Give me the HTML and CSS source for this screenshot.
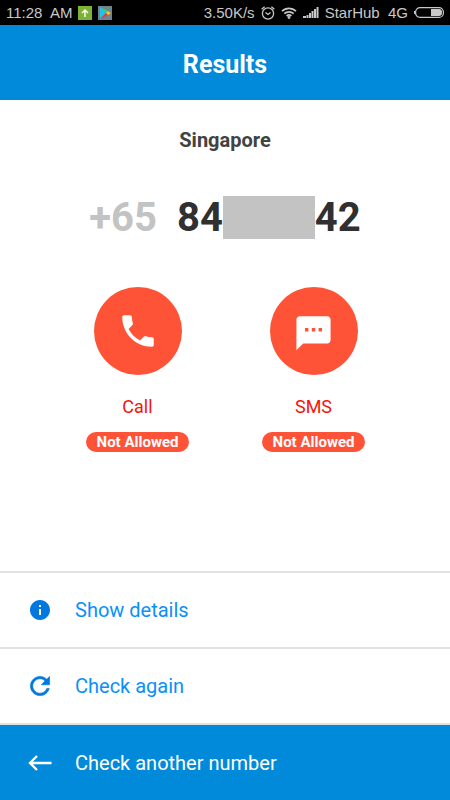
FILE: index.html
```html
<!DOCTYPE html>
<html lang="en">
<head>
    <meta charset="UTF-8">
    <meta name="viewport" content="width=device-width, initial-scale=1">
    <title>Results</title>
    <link rel="stylesheet" href="styles.css">
</head>
<body>
    <div class="status-bar">
        <span class="status-time">11:28&nbsp; AM</span>
        <svg class="status-app" viewBox="0 0 14 14" width="14" height="14">
            <rect width="14" height="14" fill="#7cb334"/>
            <path d="M7 11V4M4 7l3-3 3 3" fill="none" stroke="#fff" stroke-width="1.4"/>
        </svg>
        <svg class="status-app" viewBox="0 0 14 14" width="14" height="14">
            <rect width="14" height="14" fill="#71838f"/>
            <path d="M2 1l6 6-6 6z" fill="#20c4e8"/>
            <path d="M2 1l8 4-2 2z" fill="#35d07c"/>
            <path d="M2 13l8-4-2-2z" fill="#ee3344"/>
            <path d="M10 5l3 2-3 2-2-2z" fill="#ffc21c"/>
        </svg>
        <span class="status-right">
            <span>3.50K/s</span>
            <svg viewBox="0 0 14 14" width="14" height="14" fill="none" stroke="#c8c8c8" stroke-width="1.3">
                <circle cx="7" cy="7.5" r="5.6"/>
                <path d="M0.600 3.200L3.600 0.700M13.400 3.200L10.400 0.700M4.500 6.500L7 8.500l2.500-2"/>
            </svg>
            <svg viewBox="0 0 16 12" width="16" height="12" fill="none" stroke="#c8c8c8" stroke-width="1.7">
                <path d="M1 4.2a10 10 0 0 1 14 0M3.3 6.7a6.8 6.8 0 0 1 9.4 0M5.6 9a3.6 3.6 0 0 1 4.8 0"/>
                <circle cx="8" cy="10.5" r="0.6"/>
            </svg>
            <svg viewBox="0 0 16 11" width="16" height="11" fill="#c8c8c8">
                <path d="M0 9h3v2H0zM3.500 8h2v3h-2zM6 6h2v5H6zM8.500 4h2v7h-2zM11 2h2v9h-2zM13.500 0h2v11h-2z"/>
            </svg>
            <span>StarHub&nbsp; 4G</span>
            <svg viewBox="0 0 30 11" width="30" height="11">
                <rect x="1.600" y="0.600" width="27.800" height="9.800" rx="4.500" fill="none" stroke="#c8c8c8" stroke-width="1.200"/>
                <path d="M17 2h8a3 3 0 0 1 3 3v1a3 3 0 0 1-3 3h-8z" fill="#c8c8c8"/>
                <path d="M0 4h1.500v3H0z" fill="#c8c8c8"/>
            </svg>
        </span>
    </div>

    <header class="header">
        <h1>Results</h1>
    </header>

    <main class="main-content">
        <h2 class="country">Singapore</h2>
        <div class="phone-number">
            <span class="dial-code">+65</span>
            <span>84</span>
            <span class="hidden-digits"></span>
            <span>42</span>
        </div>

        <div class="results">
            <div class="result">
                <div class="result-icon">
                    <svg viewBox="0 0 24 24" width="42" height="42" fill="#fff">
                        <path d="M6.62 10.79c1.44 2.83 3.76 5.140 6.590 6.590l2.200-2.200c.27-.27.67-.36 1.020-.24 1.120.37 2.330.57 3.570.57.55 0 1 .45 1 1V20c0 .55-.45 1-1 1-9.390 0-17-7.610-17-17 0-.55.45-1 1-1h3.500c.55 0 1 .45 1 1 0 1.250.2 2.450.57 3.570.11.35.03.74-.25 1.020l-2.200 2.200z"/>
                    </svg>
                </div>
                <div class="result-name">Call</div>
                <div class="result-badge">Not Allowed</div>
            </div>
            <div class="result">
                <div class="result-icon">
                    <svg viewBox="0 -1 24 24" width="41" height="41" fill="#fff">
                        <path d="M20 2H4c-1.100 0-1.990.9-1.990 2L2 22l4-4h14c1.100 0 2-.9 2-2V4c0-1.100-.9-2-2-2zM9 11H7V9h2v2zm4 0h-2V9h2v2zm4 0h-2V9h2v2z"/>
                    </svg>
                </div>
                <div class="result-name">SMS</div>
                <div class="result-badge">Not Allowed</div>
            </div>
        </div>
    </main>

    <nav class="menu">
        <button class="menu-btn" type="button">
            <svg viewBox="0 0 24 24" width="24" height="24" fill="#0078e0">
                <path d="M12 2C6.480 2 2 6.480 2 12s4.480 10 10 10 10-4.480 10-10S17.520 2 12 2zm1 15h-2v-6h2v6zm0-8h-2V7h2v2z"/>
            </svg>
            Show details
        </button>
        <button class="menu-btn" type="button">
            <svg viewBox="2 2 20 20" width="24" height="24" fill="#0078e0" stroke="#0078e0" stroke-width="0.5">
                <path d="M17.650 6.350C16.200 4.900 14.210 4 12 4c-4.420 0-7.990 3.580-7.990 8s3.570 8 7.990 8c3.730 0 6.840-2.550 7.730-6h-2.080c-.82 2.330-3.040 4-5.650 4-3.310 0-6-2.690-6-6s2.690-6 6-6c1.660 0 3.140.69 4.220 1.780L13 11h7V4l-2.350 2.350z"/>
            </svg>
            Check again
        </button>
        <button class="menu-btn menu-btn-primary" type="button">
            <svg viewBox="0 0 24 24" width="24" height="24" fill="none" stroke="#fff" stroke-width="2.4">
                <path d="M23.500 12H2.500M9 5l-7 7 7 7"/>
            </svg>
            Check another number
        </button>
    </nav>
</body>
</html>
```
FILE: styles.css
```css
* {
    box-sizing: border-box;
}

body {
    font-family: Roboto, sans-serif;
    margin: 0;
    min-height: 100vh;
    display: flex;
    flex-direction: column;
    background: #fff;
}

svg {
    flex-shrink: 0;
}

.status-bar {
    display: flex;
    align-items: center;
    height: 25px;
    padding: 0 6px;
    background: #000;
    color: #c8c8c8;
    font-family: "Liberation Sans", Arial, sans-serif;
    font-size: 15px;
    white-space: nowrap;
}

.status-app {
    margin-left: 6px;
}

.status-right {
    display: flex;
    align-items: center;
    gap: 6px;
    margin-left: auto;
}

.header {
    display: flex;
    align-items: center;
    justify-content: center;
    height: 75px;
    padding-top: 3px;
    background: #008ad9;
    color: #fff;
}

.header h1 {
    margin: 0;
    font-size: 25px;
}

.main-content {
    flex: 1;
    text-align: center;
}

.country {
    margin: 28px 0 0;
    font-size: 20px;
    line-height: 24px;
    color: #424242;
}

.phone-number {
    display: flex;
    align-items: center;
    justify-content: center;
    margin-top: 44px;
    font-size: 40px;
    font-weight: bold;
    line-height: 43px;
    color: #303030;
}

.dial-code {
    margin-right: 20px;
    color: #c3c3c3;
}

.hidden-digits {
    width: 92px;
    height: 43px;
    background: #c3c3c3;
}

.results {
    display: grid;
    grid-template-columns: 176px 176px;
    justify-content: center;
    margin-top: 48px;
    padding-left: 1px;
}

.result {
    display: flex;
    flex-direction: column;
    align-items: center;
}

.result-icon {
    display: flex;
    align-items: center;
    justify-content: center;
    width: 88px;
    height: 88px;
    border-radius: 50%;
    background: #ff5338;
}

.result-name {
    margin-top: 20px;
    font-size: 18px;
    line-height: 24px;
    color: #f5140c;
}

.result-badge {
    margin-top: 13px;
    padding: 0 11px;
    border-radius: 10px;
    background: #ff5338;
    color: #fff;
    font-size: 15px;
    font-weight: bold;
    line-height: 20px;
}

.menu-btn {
    display: flex;
    align-items: center;
    gap: 23px;
    width: 100%;
    height: 76px;
    padding: 0 28px;
    border: none;
    border-top: 2px solid #e2e2e2;
    background: #fff;
    color: #0a90fa;
    font-family: inherit;
    font-size: 20px;
    cursor: pointer;
}

.menu-btn-primary {
    height: 77px;
    background: #008ad9;
    color: #fff;
}
```
